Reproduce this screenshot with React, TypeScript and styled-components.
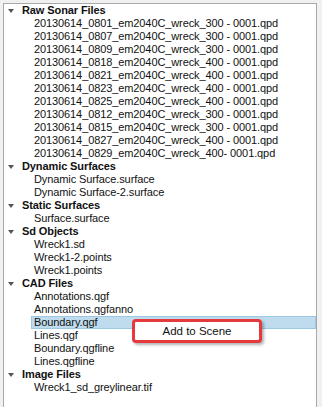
import React from 'react';
import styled, { createGlobalStyle } from 'styled-components';

const GlobalStyle = createGlobalStyle`
  html, body {
    margin: 0;
    padding: 0;
    background: #f0f0f0;
    overflow: hidden;
  }
`;

interface TreeGroup {
  title: string;
  items: string[];
}

const groups: TreeGroup[] = [
  {
    title: 'Raw Sonar Files',
    items: [
      '20130614_0801_em2040C_wreck_300 - 0001.qpd',
      '20130614_0807_em2040C_wreck_300 - 0001.qpd',
      '20130614_0809_em2040C_wreck_300 - 0001.qpd',
      '20130614_0818_em2040C_wreck_400 - 0001.qpd',
      '20130614_0821_em2040C_wreck_400 - 0001.qpd',
      '20130614_0823_em2040C_wreck_400 - 0001.qpd',
      '20130614_0825_em2040C_wreck_400 - 0001.qpd',
      '20130614_0812_em2040C_wreck_300 - 0001.qpd',
      '20130614_0815_em2040C_wreck_300 - 0001.qpd',
      '20130614_0827_em2040C_wreck_400 - 0001.qpd',
      '20130614_0829_em2040C_wreck_400- 0001.qpd',
    ],
  },
  { title: 'Dynamic Surfaces', items: ['Dynamic Surface.surface', 'Dynamic Surface-2.surface'] },
  { title: 'Static Surfaces', items: ['Surface.surface'] },
  { title: 'Sd Objects', items: ['Wreck1.sd', 'Wreck1-2.points', 'Wreck1.points'] },
  {
    title: 'CAD Files',
    items: [
      'Annotations.qgf',
      'Annotations.qgfanno',
      'Boundary.qgf',
      'Lines.qgf',
      'Boundary.qgfline',
      'Lines.qgfline',
    ],
  },
  { title: 'Image Files', items: ['Wreck1_sd_greylinear.tif'] },
];

const SELECTED = 'Boundary.qgf';

const Panel = styled.div`
  position: relative;
  margin: 3px 0 0 3px;
  width: 314px;
  height: 420px;
  box-sizing: border-box;
  background: #fff;
  border: 1px solid #a9a9a9;
  font-family: 'Liberation Sans', Arial, sans-serif;
  font-size: 11px;
  letter-spacing: -0.1px;
  color: #111;
`;

const HeaderRow = styled.div`
  display: flex;
  align-items: center;
  height: 13px;
  line-height: 13px;
  padding-left: 4px;
  font-weight: bold;
  white-space: nowrap;
`;

const Arrow = styled.span`
  width: 0;
  height: 0;
  border-left: 3px solid transparent;
  border-right: 3px solid transparent;
  border-top: 4px solid #555;
  margin-right: 8px;
  margin-top: 1px;
`;

const ItemRow = styled.div<{ $selected?: boolean }>`
  height: 13px;
  margin-left: 27px;
  padding-left: ${({ $selected }) => ($selected ? '2px' : '3px')};
  white-space: nowrap;
  box-sizing: border-box;
  background: ${({ $selected }) => ($selected ? '#bfdcee' : 'transparent')};
  border: ${({ $selected }) => ($selected ? '1px solid #9cc8e4' : 'none')};
  line-height: ${({ $selected }) => ($selected ? '11px' : '13px')};
`;

const ContextMenu = styled.div`
  position: absolute;
  left: 128px;
  top: 315px;
  width: 130px;
  height: 24px;
  box-sizing: border-box;
  background: #fff;
  border: 3px solid #e5393d;
  border-radius: 4px;
  box-shadow: 2px 2px 3px rgba(0, 0, 0, 0.3);
  display: flex;
  align-items: center;
  justify-content: center;
  font-size: 11.5px;
  letter-spacing: 0;
  color: #111;
`;

const App: React.FC = () => {
  return (
    <>
      <GlobalStyle />
      <Panel>
        {groups.map(group => (
          <div key={group.title}>
            <HeaderRow>
              <Arrow />
              {group.title}
            </HeaderRow>
            {group.items.map(item => (
              <ItemRow key={item} $selected={item === SELECTED}>
                {item}
              </ItemRow>
            ))}
          </div>
        ))}
        <ContextMenu>Add to Scene</ContextMenu>
      </Panel>
    </>
  );
};

export default App;
